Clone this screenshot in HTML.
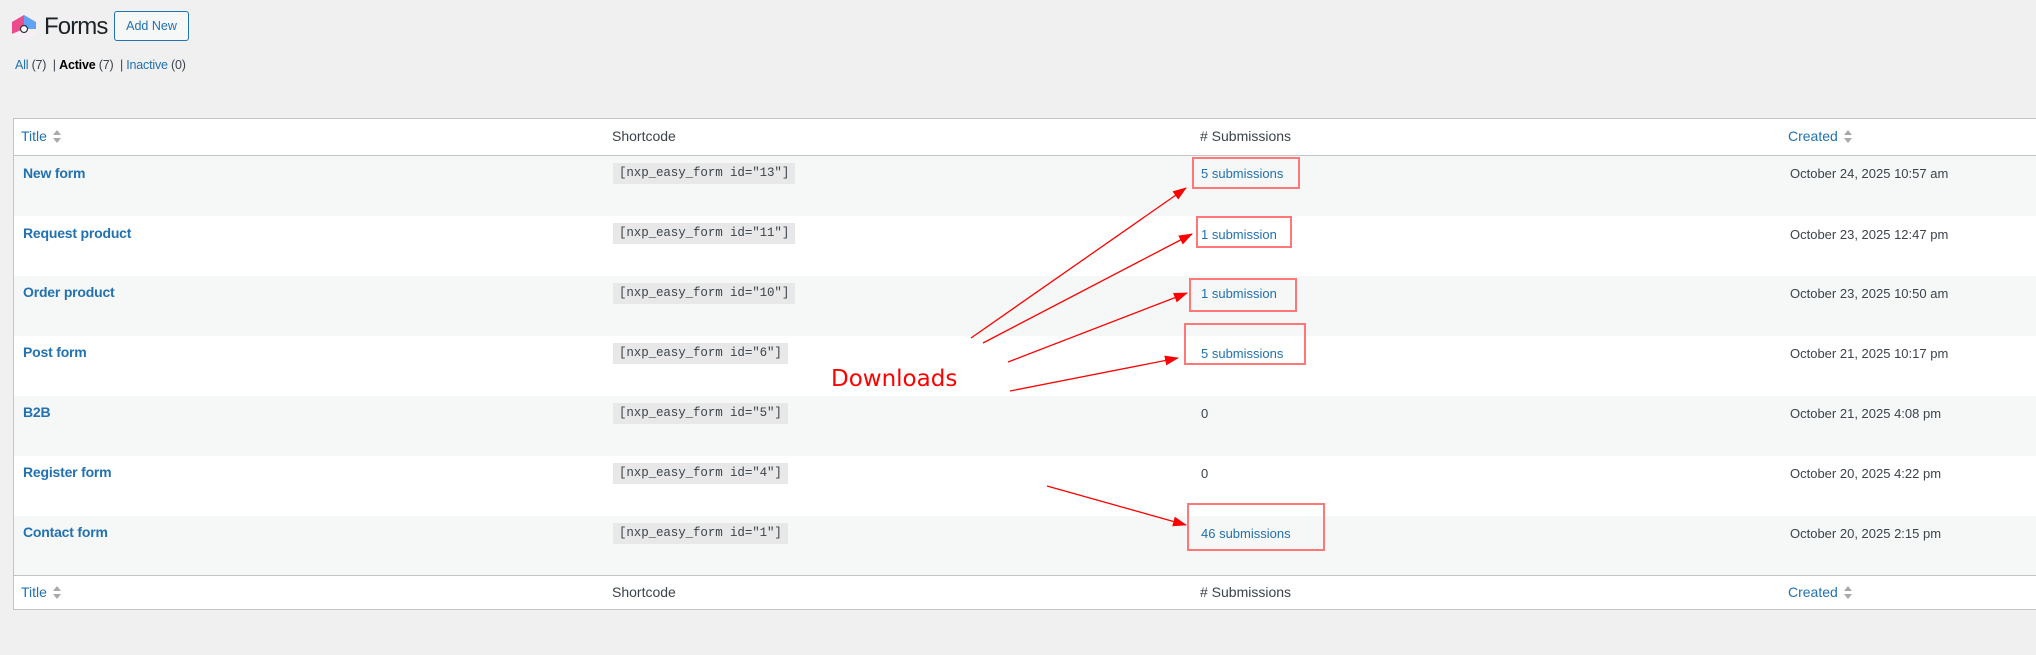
<!DOCTYPE html>
<html><head><meta charset="utf-8"><style>
body{margin:0;width:2036px;height:655px;background:#f0f0f1;font-family:"Liberation Sans",sans-serif;color:#3c434a;position:relative;overflow:hidden}
.a{position:absolute;white-space:nowrap}
a{color:#2271b1;text-decoration:none}
.tbl{position:absolute;left:13px;top:118px;width:2030px;height:492px;background:#fff;border:1px solid #c3c4c7;box-sizing:border-box}
.row{position:absolute;left:0;right:0;height:60px}
.st{background:#f6f7f7}
.code{position:absolute;background:#e8e8e8;font-family:"Liberation Mono",monospace;font-size:12.5px;color:#3c434a;padding:4px 6px;height:13px;line-height:13px;letter-spacing:-0.1px}
.t{font-size:14px;font-weight:bold;color:#2271b1;letter-spacing:-0.2px}
.sm{font-size:13px}
.box{position:absolute;border:2px solid #f77;box-sizing:border-box}
.sort{display:inline-block;vertical-align:middle;margin-left:6px;width:8px;height:14px;position:relative}
</style></head><body>
<svg class="a" style="left:11px;top:14px" width="26" height="28" viewBox="0 0 26 28">
<polygon points="13,1 25,8 25,15 13,15" fill="#5ea3f5"/>
<polygon points="13,1 1,8 1,20 13,15" fill="#ec4b8c"/>
<polygon points="1,20 13,27 25,20 25,15 13,15" fill="#f6f0f6"/>
<circle cx="13" cy="15" r="3.5" fill="#fff" stroke="#333" stroke-width="1.2"/>
</svg>
<div class="a" style="left:44px;top:13px;font-size:24px;color:#1d2327;letter-spacing:-0.9px">Forms</div>
<div class="a" style="left:114px;top:11px;width:75px;height:30px;border:1px solid #2271b1;border-radius:3px;background:#f6f7f7;box-sizing:border-box;color:#2271b1;font-size:12.5px;line-height:28px;text-align:center">Add New</div>
<div class="a" style="left:15px;top:58px;font-size:12.5px;letter-spacing:-0.2px"><a>All</a> (7) &nbsp;| <b style="color:#000">Active</b> (7) &nbsp;| <a>Inactive</a> (0)</div>

<div class="tbl">
 <div class="row" style="top:0;height:36px;border-bottom:1px solid #c3c4c7"></div>
 <div class="row st" style="top:37px"></div>
 <div class="row" style="top:97px"></div>
 <div class="row st" style="top:157px"></div>
 <div class="row" style="top:217px"></div>
 <div class="row st" style="top:277px"></div>
 <div class="row" style="top:337px"></div>
 <div class="row st" style="top:397px"></div>
 <div class="row" style="top:456px;height:36px;border-top:1px solid #c3c4c7"></div>
</div>

<div class="a" style="left:21px;top:128px;font-size:14px"><a>Title</a><svg class="sort" viewBox="0 0 8 14"><polygon points="4,0 8,5 0,5" fill="#a7aaad"/><polygon points="0,8 8,8 4,13" fill="#a7aaad"/></svg></div>
<div class="a" style="left:612px;top:128px;font-size:14px">Shortcode</div>
<div class="a" style="left:1200px;top:128px;font-size:14px"># Submissions</div>
<div class="a" style="left:1788px;top:128px;font-size:14px"><a>Created</a><svg class="sort" viewBox="0 0 8 14"><polygon points="4,0 8,5 0,5" fill="#a7aaad"/><polygon points="0,8 8,8 4,13" fill="#a7aaad"/></svg></div>
<div class="a" style="left:21px;top:584px;font-size:14px"><a>Title</a><svg class="sort" viewBox="0 0 8 14"><polygon points="4,0 8,5 0,5" fill="#a7aaad"/><polygon points="0,8 8,8 4,13" fill="#a7aaad"/></svg></div>
<div class="a" style="left:612px;top:584px;font-size:14px">Shortcode</div>
<div class="a" style="left:1200px;top:584px;font-size:14px"># Submissions</div>
<div class="a" style="left:1788px;top:584px;font-size:14px"><a>Created</a><svg class="sort" viewBox="0 0 8 14"><polygon points="4,0 8,5 0,5" fill="#a7aaad"/><polygon points="0,8 8,8 4,13" fill="#a7aaad"/></svg></div>

<div class="a t" style="left:23px;top:165px">New form</div>
<div class="a t" style="left:23px;top:225px">Request product</div>
<div class="a t" style="left:23px;top:284px">Order product</div>
<div class="a t" style="left:23px;top:344px">Post form</div>
<div class="a t" style="left:23px;top:404px">B2B</div>
<div class="a t" style="left:23px;top:464px">Register form</div>
<div class="a t" style="left:23px;top:524px">Contact form</div>

<div class="code" style="left:613px;top:163px">[nxp_easy_form id="13"]</div>
<div class="code" style="left:613px;top:223px">[nxp_easy_form id="11"]</div>
<div class="code" style="left:613px;top:283px">[nxp_easy_form id="10"]</div>
<div class="code" style="left:613px;top:343px">[nxp_easy_form id="6"]</div>
<div class="code" style="left:613px;top:403px">[nxp_easy_form id="5"]</div>
<div class="code" style="left:613px;top:463px">[nxp_easy_form id="4"]</div>
<div class="code" style="left:613px;top:523px">[nxp_easy_form id="1"]</div>

<div class="a sm" style="left:1201px;top:166px"><a>5 submissions</a></div>
<div class="a sm" style="left:1201px;top:227px"><a>1 submission</a></div>
<div class="a sm" style="left:1201px;top:286px"><a>1 submission</a></div>
<div class="a sm" style="left:1201px;top:346px"><a>5 submissions</a></div>
<div class="a sm" style="left:1201px;top:406px">0</div>
<div class="a sm" style="left:1201px;top:466px">0</div>
<div class="a sm" style="left:1201px;top:526px"><a>46 submissions</a></div>

<div class="a sm" style="left:1790px;top:166px">October 24, 2025 10:57 am</div>
<div class="a sm" style="left:1790px;top:227px">October 23, 2025 12:47 pm</div>
<div class="a sm" style="left:1790px;top:286px">October 23, 2025 10:50 am</div>
<div class="a sm" style="left:1790px;top:346px">October 21, 2025 10:17 pm</div>
<div class="a sm" style="left:1790px;top:406px">October 21, 2025 4:08 pm</div>
<div class="a sm" style="left:1790px;top:466px">October 20, 2025 4:22 pm</div>
<div class="a sm" style="left:1790px;top:526px">October 20, 2025 2:15 pm</div>

<div class="box" style="left:1192px;top:157px;width:108px;height:32px"></div>
<div class="box" style="left:1196px;top:216px;width:96px;height:32px"></div>
<div class="box" style="left:1189px;top:278px;width:108px;height:34px"></div>
<div class="box" style="left:1184px;top:323px;width:122px;height:42px"></div>
<div class="box" style="left:1187px;top:503px;width:138px;height:48px"></div>
<svg class="a" style="left:0;top:0" width="2036" height="655">
<defs><marker id="m" markerWidth="14" markerHeight="10" refX="13" refY="5" orient="auto" markerUnits="userSpaceOnUse" viewBox="0 0 14 10"><polygon points="0,0 14,5 0,10" fill="red"/></marker></defs>
<g stroke="red" stroke-width="1.3" marker-end="url(#m)" fill="none">
<line x1="971" y1="338" x2="1186" y2="188"/>
<line x1="983" y1="343" x2="1192" y2="234"/>
<line x1="1008" y1="362" x2="1187" y2="293"/>
<line x1="1010" y1="391" x2="1178" y2="358"/>
<line x1="1047" y1="486" x2="1186" y2="525"/>
</g>
<text x="831" y="386" font-family="DejaVu Sans, sans-serif" font-size="23" fill="red">Downloads</text>
</svg>
</body></html>
